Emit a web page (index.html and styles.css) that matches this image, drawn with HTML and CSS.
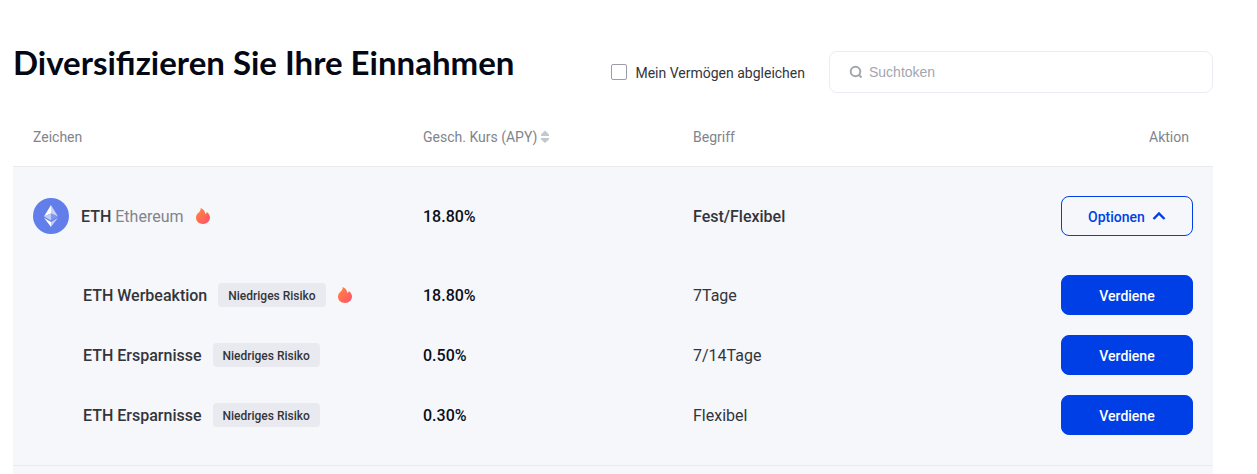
FILE: index.html
```
<!DOCTYPE html>
<html lang="de">
<head>
<meta charset="utf-8">
<title>Diversifizieren Sie Ihre Einnahmen</title>
<link rel="stylesheet" href="styles.css">
</head>
<body>
<svg class="defs" width="0" height="0" aria-hidden="true">
  <defs>
    <linearGradient id="fire" x1="0" y1="0" x2="1" y2="1">
      <stop offset="0.2" stop-color="#ff7f45"/>
      <stop offset="1" stop-color="#ff4f6c"/>
    </linearGradient>
    <symbol id="flame" viewBox="0 0 16 18">
      <path fill="url(#fire)" d="M5.700 1C8.400 2 10 4 10.300 7C11.200 6.700 11.700 6 11.900 5C14 6.600 15 8.600 15 10.600C15 14.300 12 17 8 17C4 17 1 14.400 1 10.800C1 8.800 1.800 7.200 3.500 5.800C5 4.500 5.700 3 5.700 1Z"/>
    </symbol>
  </defs>
</svg>
<main class="page">
  <header class="toolbar">
    <h1 class="title">Diversifizieren Sie Ihre Einnahmen</h1>
    <div class="filters">
      <label class="match"><input class="match-box" type="checkbox"><span class="label">Mein Vermögen abgleichen</span></label>
      <label class="search">
        <svg class="search-icon" viewBox="0 0 14 14" width="14" height="14" fill="none" stroke="#a3a6b1" stroke-width="2" aria-hidden="true"><circle cx="6.500" cy="6.500" r="4.800"/><path d="M9.500 9.500L12.500 12.500"/></svg>
        <input class="search-input" type="text" placeholder="Suchtoken" aria-label="Suchtoken">
      </label>
    </div>
  </header>
  <table class="rates">
    <colgroup><col class="col-token"><col class="col-rate"><col><col class="col-action"></colgroup>
    <thead>
      <tr>
        <th>Zeichen</th>
        <th><span class="sort">Gesch. Kurs (APY)<svg viewBox="0 0 10 14" width="10" height="14" fill="#c5c7d0" aria-hidden="true"><path d="M5 0.500L9 4.500V6H1V4.500ZM5 13L9 9.500V8H1V9.500Z"/></svg></span></th>
        <th>Begriff</th>
        <th class="action head-action">Aktion</th>
      </tr>
    </thead>
    <tbody class="group">
      <tr class="token-row">
        <td><div class="token">
          <svg class="coin" viewBox="0 0 36 36" width="36" height="36" aria-hidden="true">
            <circle cx="18" cy="18" r="18" fill="#627eea"/>
            <path fill="#fff" d="M18 7L11 18.500L18 15.400Z"/>
            <path fill="#c9d2f8" d="M18 7L25 18.500L18 15.400Z"/>
            <path fill="#c0cbf7" d="M11 18.500L18 15.400V22.500Z"/>
            <path fill="#8197ee" d="M25 18.500L18 15.400V22.500Z"/>
            <path fill="#fff" d="M11 19.800L18 23.900V29Z"/>
            <path fill="#c0cbf7" d="M25 19.800L18 23.900V29Z"/>
          </svg>
          <span class="label token-name"><b class="strong">ETH</b> Ethereum</span>
          <svg class="flame" width="16" height="18" role="img" aria-label="Beliebt"><use href="#flame"/></svg>
        </div></td>
        <td class="rate"><div class="label">18.80%</div></td>
        <td class="strong"><div class="label">Fest/Flexibel</div></td>
        <td class="action"><button class="btn btn-outline" type="button"><span class="label">Optionen</span><svg viewBox="0 0 14 10" width="14" height="10" fill="none" stroke="currentColor" stroke-width="2.400" aria-hidden="true"><path d="M1.500 8L7 2.500L12.500 8"/></svg></button></td>
      </tr>
      <tr class="product-row">
        <td><div class="product"><span class="label">ETH Werbeaktion</span><span class="tag">Niedriges Risiko</span><svg class="flame" width="16" height="18" role="img" aria-label="Beliebt"><use href="#flame"/></svg></div></td>
        <td class="rate"><div class="label">18.80%</div></td>
        <td><div class="label">7Tage</div></td>
        <td class="action"><button class="btn" type="button"><span class="label">Verdiene</span></button></td>
      </tr>
      <tr class="product-row">
        <td><div class="product"><span class="label">ETH Ersparnisse</span><span class="tag">Niedriges Risiko</span></div></td>
        <td class="rate"><div class="label">0.50%</div></td>
        <td><div class="label">7/14Tage</div></td>
        <td class="action"><button class="btn" type="button"><span class="label">Verdiene</span></button></td>
      </tr>
      <tr class="product-row">
        <td><div class="product"><span class="label">ETH Ersparnisse</span><span class="tag">Niedriges Risiko</span></div></td>
        <td class="rate"><div class="label">0.30%</div></td>
        <td><div class="label">Flexibel</div></td>
        <td class="action"><button class="btn" type="button"><span class="label">Verdiene</span></button></td>
      </tr>
    </tbody>
  </table>
  <div class="next-group"></div>
</main>
</body>
</html>
```
FILE: styles.css
```
* { box-sizing: border-box; }
body {
  margin: 0;
  background: #fff;
  color: #33353b;
  font: 16px/24px Roboto, sans-serif;
}
.defs { position: absolute; }
.page {
  display: flex;
  flex-direction: column;
  min-height: 100vh;
  padding: 40px 44px 0 13px;
}
.toolbar {
  display: flex;
  justify-content: space-between;
  align-items: flex-start;
}
.title {
  margin: 0;
  color: #040814;
  font: 700 33px/44px Lato, sans-serif;
  white-space: nowrap;
}
.filters {
  display: flex;
  align-items: center;
  gap: 24px;
  padding-top: 11px;
}
.label { padding-top: 2px; }
.match {
  display: flex;
  align-items: center;
  gap: 8px;
  font-size: 14px;
  white-space: nowrap;
}
.match-box {
  appearance: none;
  width: 16px;
  height: 16px;
  margin: 0;
  border: 1px solid #9a9ca8;
  border-radius: 2px;
  background: #fff;
}
.search {
  display: flex;
  align-items: center;
  gap: 6px;
  width: 384px;
  height: 42px;
  padding: 0 19px;
  border: 1px solid #ebecf2;
  border-radius: 8px;
}
.search-icon { flex: none; }
.search-input {
  flex: 1;
  min-width: 0;
  padding: 0;
  border: 0;
  outline: 0;
  background: none;
  font: 14px/20px "Liberation Sans", Arial, sans-serif;
}
.search-input::placeholder { color: #a3a6b1; }

.rates {
  width: 100%;
  margin-top: 14px;
  border-collapse: separate;
  border-spacing: 0;
  table-layout: fixed;
}
.col-token { width: 390px; }
.col-rate { width: 270px; }
.col-action { width: 172px; }
th, td {
  padding: 0 20px;
  text-align: left;
  vertical-align: middle;
}
th {
  height: 60px;
  border-bottom: 1px solid #e9eaef;
  color: #81848c;
  font-size: 14px;
  font-weight: 400;
}
.action { text-align: right; }
.head-action { padding-right: 24px; }
.sort {
  display: flex;
  align-items: center;
  gap: 3px;
}
.group { background: #f5f7fb; }
.token-row { height: 98px; }
.product-row { height: 60px; }
.token {
  display: flex;
  align-items: center;
}
.token-name {
  margin: 0 11px 0 12px;
  color: #81848c;
}
.strong {
  color: #33353b;
  font-weight: 500;
}
.rate {
  color: #0b0e1a;
  font-weight: 500;
}
.product {
  display: flex;
  align-items: center;
  gap: 11px;
  padding-left: 50px;
  font-weight: 500;
  white-space: nowrap;
}
.tag {
  padding: 2px 10px 0;
  border-radius: 4px;
  background: #e9eaef;
  font-size: 12px;
  line-height: 22px;
}
.btn {
  display: inline-flex;
  align-items: center;
  justify-content: center;
  gap: 7px;
  width: 132px;
  height: 40px;
  padding: 0;
  border: 1px solid #003fe6;
  border-radius: 8px;
  background: #003fe6;
  color: #fff;
  font: 500 14px/20px Roboto, sans-serif;
  vertical-align: middle;
}
.btn-outline {
  background: transparent;
  color: #003fe6;
}
.next-group {
  flex: 1;
  border-top: 20px solid #f5f7fb;
  background: linear-gradient(#e9eaef 1px, #f5f7fb 1px) padding-box;
}
```
